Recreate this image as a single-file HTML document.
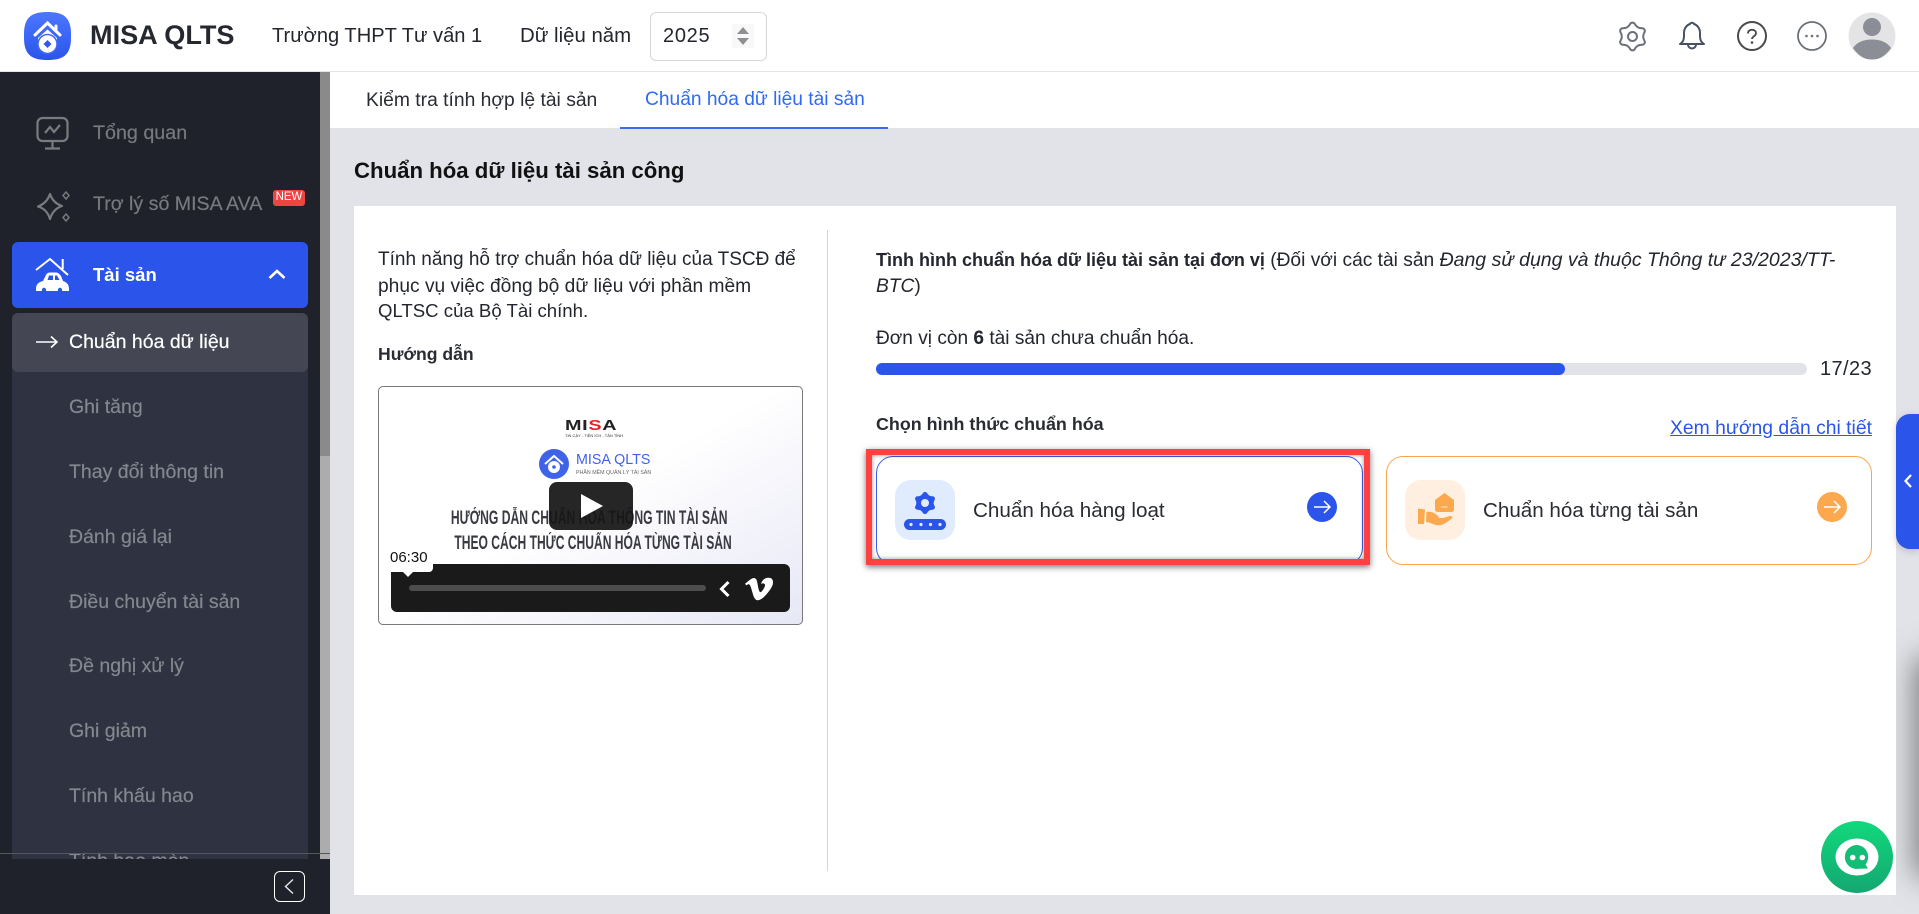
<!DOCTYPE html>
<html lang="vi"><head><meta charset="utf-8"><title>MISA QLTS</title>
<style>
html,body{margin:0;padding:0;width:1919px;height:914px;overflow:hidden;background:#fff}
body{font-family:"Liberation Sans","Noto Sans CJK SC",sans-serif;color:#23262e;position:relative}
.a{position:absolute}
.t{position:absolute;white-space:nowrap;line-height:24px;height:24px}
svg{display:block;overflow:visible}
b{font-weight:700}
.sub{font-size:19.500px;color:#85878f;left:69px;-webkit-text-stroke:.2px}
</style></head><body>

<!-- Header -->
<div class="a" style="left:0;top:0;width:1919px;height:71px;background:#fff"></div>
<div class="a" style="left:0;top:71px;width:1919px;height:1px;background:#e4e4e6"></div>
<svg class="a" style="left:24px;top:12px" width="47" height="48" viewBox="0 0 47 48">
<defs><linearGradient id="lg" x1="0" y1="0" x2="0" y2="1"><stop offset="0" stop-color="#4d77ff"/><stop offset="1" stop-color="#2b55ea"/></linearGradient></defs>
<path d="M23.5 0C38 0 47 4 47 22V26C47 44 38 48 23.5 48S0 44 0 26V22C0 4 9 0 23.5 0Z" fill="url(#lg)"/>
<path d="M11 23L23.500 11 36 23M32 18V14" fill="none" stroke="#fff" stroke-width="3" stroke-linecap="round"/>
<path d="M14 33V26L23.500 17.500 33 26V33Z" fill="#fff"/>
<circle cx="23.500" cy="32" r="9.500" fill="#fff" stroke="#3f69f6" stroke-width="1.500"/>
<path d="M23.500 28L27.500 32 23.500 36 19.500 32Z" fill="#3158ee"/>
</svg>
<div class="t" style="left:90px;top:23px;font-size:27.100px;font-weight:700;color:#26282f">MISA QLTS</div>
<div class="t" style="left:272px;top:24px;font-size:20.100px">Trường THPT Tư vấn 1</div>
<div class="t" style="left:520px;top:24px;font-size:20.400px">Dữ liệu năm</div>
<div class="a" style="left:650px;top:12px;width:115px;height:47px;border:1px solid #d5d6d9;border-radius:6px;background:#fff"></div>
<div class="t" style="left:663px;top:24px;font-size:20px;letter-spacing:.7px">2025</div>
<div class="a" style="left:732px;top:24px;width:22px;height:24px;background:#f8f8f8"></div>
<svg class="a" style="left:736px;top:26px" width="14" height="20" viewBox="0 0 14 20"><path d="M7 1L13 8H1Z M1 12H13L7 19Z" fill="#8f9094"/></svg>

<svg class="a" style="left:1618.500px;top:22.500px" width="27" height="27" viewBox="0 0 30 30"><path d="M12.330 1.260A3 3 0 0 1 17.670 1.260Q20.250 5.910 25.570 5.820A3 3 0 0 1 28.240 10.440Q25.500 15 28.240 19.560A3 3 0 0 1 25.570 24.180Q20.250 24.090 17.670 28.740A3 3 0 0 1 12.330 28.740Q9.750 24.090 4.430 24.180A3 3 0 0 1 1.760 19.560Q4.500 15 1.760 10.440A3 3 0 0 1 4.430 5.820Q9.750 5.910 12.330 1.260Z" fill="none" stroke="#6b7078" stroke-width="2.200"/><circle cx="15" cy="15" r="5" fill="none" stroke="#6b7078" stroke-width="2.200"/></svg>
<svg class="a" style="left:1677px;top:21px" width="30" height="30" viewBox="0 0 30 30"><path d="M3 23C5 22 7 20 7 15V12C7 7 10 4 13 3A2.200 2.200 0 0 1 17 3C20 4 23 7 23 12V15C23 20 25 22 27 23Z" fill="none" stroke="#475264" stroke-width="2" stroke-linejoin="round"/><path d="M11 23.500a4 4 0 0 0 8 0" fill="none" stroke="#475264" stroke-width="2"/></svg>
<svg class="a" style="left:1737px;top:21px" width="30" height="30" viewBox="0 0 30 30"><circle cx="15" cy="15" r="14" fill="none" stroke="#4a4a4d" stroke-width="2"/><path d="M11 12.500C11 10 12.700 8.800 15 8.800s4 1.400 4 3.400c0 3-4 3-4 5.800" fill="none" stroke="#4a4a4d" stroke-width="1.800"/><circle cx="15" cy="21.500" r="1.300" fill="#4a4a4d"/></svg>
<svg class="a" style="left:1797px;top:21px" width="30" height="30" viewBox="0 0 30 30"><circle cx="15" cy="15" r="14" fill="none" stroke="#6b7078" stroke-width="1.800"/><circle cx="9.500" cy="15" r="1.300" fill="#6b7078"/><circle cx="15" cy="15" r="1.300" fill="#6b7078"/><circle cx="20.500" cy="15" r="1.300" fill="#6b7078"/></svg>
<svg class="a" style="left:1848px;top:12px" width="48" height="48" viewBox="0 0 48 48"><defs><clipPath id="av"><circle cx="24" cy="24" r="23.500"/></clipPath></defs><circle cx="24" cy="24" r="23.500" fill="#e4e4e6"/><g clip-path="url(#av)"><circle cx="24" cy="15" r="9" fill="#8b8d97"/><path d="M5 36C9 30 16 27.500 24 27.500S39 30 43 36C39 42 32 48 24 48S9 42 5 36Z" fill="#8b8d97"/></g></svg>

<!-- Content -->
<div class="a" style="left:330px;top:72px;width:1589px;height:56px;background:#fff"></div>
<div class="a" style="left:330px;top:128px;width:1589px;height:786px;background:#e1e3e8;overflow:hidden">
  <div class="a" style="left:1591px;top:532px;width:20px;height:214px;border-radius:10px;box-shadow:0 0 30px 6px #777"></div>
</div>
<div class="t" style="left:366px;top:89px;font-size:19.300px;color:#2a2c33">Kiểm tra tính hợp lệ tài sản</div>
<div class="t" style="left:645px;top:88px;font-size:19.200px;color:#2c6bf6">Chuẩn hóa dữ liệu tài sản</div>
<div class="a" style="left:620px;top:127px;width:268px;height:1.500px;background:#3a6cf0"></div>
<div class="t" style="left:354px;top:159px;font-size:22.200px;font-weight:700;color:#111">Chuẩn hóa dữ liệu tài sản công</div>
<div class="a" style="left:354px;top:206px;width:1542px;height:689px;background:#fff"></div>
<div class="a" style="left:827px;top:230px;width:1px;height:641px;background:#d3d4d7"></div>

<!-- Left column -->
<div class="t" style="left:378px;top:248px;font-size:19px">Tính năng hỗ trợ chuẩn hóa dữ liệu của TSCĐ để</div>
<div class="t" style="left:378px;top:275px;font-size:19.200px">phục vụ việc đồng bộ dữ liệu với phần mềm</div>
<div class="t" style="left:378px;top:299px;font-size:18.600px">QLTSC của Bộ Tài chính.</div>
<div class="t" style="left:378px;top:342px;font-size:17.600px;font-weight:700;color:#2a2c33">Hướng dẫn</div>

<!-- Video -->
<div class="a" style="left:378px;top:386px;width:423px;height:237px;border:1px solid #77777c;border-radius:5px;overflow:hidden;background:linear-gradient(150deg,#fff 48%,#f5f5fb 70%,#e6e8f6 100%)">
  <div class="a" style="left:186px;top:31px;font-size:15px;line-height:16px;font-weight:900;color:#222;transform:scaleX(1.32);transform-origin:left;letter-spacing:.5px;white-space:nowrap">MI<span style="color:#e0252c">S</span>A</div>
  <div class="a" style="left:186px;top:46px;font-size:4px;line-height:5px;color:#333;white-space:nowrap">TIN CẬY - TIỆN ÍCH - TẬN TÌNH</div>
  <svg class="a" style="left:160px;top:62px" width="30" height="30" viewBox="0 0 30 30"><circle cx="15" cy="15" r="15" fill="#3f63e8"/><path d="M6 15L15 7l9 8" fill="none" stroke="#fff" stroke-width="2"/><circle cx="15" cy="18" r="6" fill="#fff"/><circle cx="15" cy="18" r="1.800" fill="#3f63e8"/></svg>
  <div class="a" style="left:197px;top:65px;font-size:14.300px;line-height:16px;color:#3f63e8;white-space:nowrap">MISA QLTS</div>
  <div class="a" style="left:197px;top:83px;font-size:5.300px;line-height:7px;color:#666;white-space:nowrap">PHẦN MỀM QUẢN LÝ TÀI SẢN</div>
  <div class="a" style="left:0;top:119px;width:423px;text-align:center;font-size:19px;line-height:25px;font-weight:700;color:#3a3b42;white-space:nowrap"><span style="display:inline-block;transform:scaleX(.64);margin-left:-6px">HƯỚNG DẪN CHUẨN HÓA THÔNG TIN TÀI SẢN</span><br><span style="display:inline-block;transform:scaleX(.636);margin-left:-4px">THEO CÁCH THỨC CHUẨN HÓA TỪNG TÀI SẢN</span></div>
  <div class="a" style="left:170px;top:95px;width:84px;height:48px;border-radius:8px;background:rgba(22,22,22,.93)"></div>
  <svg class="a" style="left:202px;top:107px" width="22" height="24" viewBox="0 0 22 24"><path d="M0 0L22 12 0 24Z" fill="#fff"/></svg>
  <div class="a" style="left:12px;top:177px;width:399px;height:48px;border-radius:6px;background:#1a1a1a"></div>
  <div class="a" style="left:30px;top:198px;width:297px;height:6px;border-radius:3px;background:#4d4d4d"></div>
  <svg class="a" style="left:340px;top:193px" width="12" height="18" viewBox="0 0 12 18"><path d="M9.500 2L2.500 9l7 7" fill="none" stroke="#fff" stroke-width="3"/></svg>
  <svg class="a" style="left:366px;top:189px" width="28" height="26" viewBox="0 0 24 24" preserveAspectRatio="none"><path d="M23.977 6.416c-.105 2.338-1.739 5.543-4.894 9.609-3.268 4.247-6.026 6.37-8.29 6.37-1.409 0-2.578-1.294-3.553-3.881L5.322 11.4C4.603 8.816 3.834 7.522 3.01 7.522c-.179 0-.806.378-1.881 1.132L0 7.197c1.185-1.044 2.351-2.084 3.501-3.128C5.08 2.701 6.266 1.984 7.055 1.91c1.867-.18 3.016 1.1 3.447 3.838.465 2.953.789 4.789.971 5.507.539 2.45 1.131 3.674 1.776 3.674.502 0 1.256-.796 2.265-2.385 1.004-1.589 1.54-2.797 1.612-3.628.144-1.371-.395-2.061-1.614-2.061-.574 0-1.167.121-1.777.391 1.186-3.868 3.434-5.757 6.762-5.637 2.473.06 3.628 1.664 3.493 4.797l-.013.01z" fill="#fff"/></svg>
  <div class="a" style="left:8px;top:162px;width:46px;height:23px;background:#fff;border-radius:0 0 4px 4px"></div>
  <svg class="a" style="left:23px;top:184px" width="12" height="7" viewBox="0 0 12 7"><path d="M0 0H12L6 6Z" fill="#fff"/></svg>
  <div class="a" style="left:11px;top:162px;font-size:15px;line-height:18px;color:#111;white-space:nowrap">06:30</div>
</div>

<!-- Right column -->
<div class="t" style="left:876px;top:248px;font-size:19.200px"><b style="font-size:18px">Tình hình chuẩn hóa dữ liệu tài sản tại đơn vị</b> (Đối với các tài sản <i style="font-size:19.500px">Đang sử dụng và thuộc Thông tư 23/2023/TT-</i></div>
<div class="t" style="left:876px;top:275px;font-size:19.200px"><i>BTC</i>)</div>
<div class="t" style="left:876px;top:327px;font-size:19.100px">Đơn vị còn <b>6</b> tài sản chưa chuẩn hóa.</div>
<div class="a" style="left:876px;top:363px;width:931px;height:12px;border-radius:6px;background:#e1e3e8"></div>
<div class="a" style="left:876px;top:363px;width:689px;height:12px;border-radius:6px;background:#2b55ea"></div>
<div class="t" style="left:1820px;top:357px;font-size:20px;letter-spacing:.4px">17/23</div>
<div class="t" style="left:876px;top:412px;font-size:17.900px;font-weight:700;color:#2a2c33">Chọn hình thức chuẩn hóa</div>
<div class="t" style="left:1572px;width:300px;text-align:right;top:416px;font-size:19.350px;color:#2b55ea;text-decoration:underline">Xem hướng dẫn chi tiết</div>

<!-- Card 1 -->
<div class="a" style="left:876px;top:456px;width:485px;height:107px;border:1px solid #3a5ee8;border-radius:17px;background:#fff"></div>
<div class="a" style="left:895px;top:480px;width:60px;height:60px;border-radius:16px;background:#e1ebfe"></div>
<svg class="a" style="left:905px;top:491px" width="40" height="40" viewBox="0 0 40 40"><path transform="translate(9.500 1.500) scale(.7)" d="M12.330 1.260A3 3 0 0 1 17.670 1.260Q20.250 5.910 25.570 5.820A3 3 0 0 1 28.240 10.440Q25.500 15 28.240 19.560A3 3 0 0 1 25.570 24.180Q20.250 24.090 17.670 28.740A3 3 0 0 1 12.330 28.740Q9.750 24.090 4.430 24.180A3 3 0 0 1 1.760 19.560Q4.500 15 1.760 10.440A3 3 0 0 1 4.430 5.820Q9.750 5.910 12.330 1.260Z" fill="#2b55ea" stroke="#2b55ea" stroke-width="1"/><circle cx="20" cy="12" r="4" fill="#e1ebfe"/><rect x="-1" y="28" width="42" height="11" rx="5.500" fill="#2b55ea"/><circle cx="6" cy="33.500" r="1.600" fill="#e1ebfe"/><circle cx="16" cy="33.500" r="1.600" fill="#e1ebfe"/><circle cx="25.500" cy="33.500" r="1.600" fill="#e1ebfe"/><circle cx="35" cy="33.500" r="1.600" fill="#e1ebfe"/></svg>
<div class="t" style="left:973px;top:499px;font-size:20.650px;color:#2a2c33">Chuẩn hóa hàng loạt</div>
<svg class="a" style="left:1307px;top:492px" width="30" height="30" viewBox="0 0 30 30"><circle cx="15" cy="15" r="15" fill="#2b55ea"/><path d="M7 15H23M17 9l6 6-6 6" fill="none" stroke="#fff" stroke-width="1.500"/></svg>

<!-- Highlight -->
<div class="a" style="left:866px;top:449px;width:492px;height:104px;border:6px solid #ff4040;box-shadow:0 2px 6px rgba(0,0,0,.55),inset 0 0 4px rgba(0,0,0,.45)"></div>

<!-- Card 2 -->
<div class="a" style="left:1386px;top:456px;width:484px;height:107px;border:1px solid #f9a54d;border-radius:17px;background:#fff"></div>
<div class="a" style="left:1405px;top:480px;width:60px;height:60px;border-radius:16px;background:#feefe0"></div>
<svg class="a" style="left:1417px;top:492px" width="36" height="36" viewBox="0 0 36 36"><path d="M18 8L27.500 1 37 8V17Q37 20 34 20H21Q18 20 18 17Z" fill="#fba84f"/><path d="M24.500 15H30.500" stroke="#feefe0" stroke-width="1"/><path d="M1 16.500L8 17.500 7 32 1 32Z" fill="#fba84f"/><path d="M9.500 20C14 19 18 21 21 24L22 26H26L33 24C36 24 36 26 34 27 28 32 24 34 19 33 15 32 12 30 9 30Z" fill="#fba84f"/></svg>
<div class="t" style="left:1483px;top:499px;font-size:20.600px;color:#2a2c33">Chuẩn hóa từng tài sản</div>
<svg class="a" style="left:1817px;top:492px" width="30" height="30" viewBox="0 0 30 30"><circle cx="15" cy="15" r="15" fill="#fba84f"/><path d="M7 15H23M17 9l6 6-6 6" fill="none" stroke="#fff" stroke-width="1.500"/></svg>

<!-- Side tab & chat -->
<div class="a" style="left:1896px;top:414px;width:23px;height:135px;background:#2b55ea;border-radius:14px 0 0 14px;box-shadow:0 2px 8px rgba(0,0,0,.18)"></div>
<svg class="a" style="left:1903px;top:472px" width="10" height="18" viewBox="0 0 10 18"><path d="M8 3L2.500 9 8 15" fill="none" stroke="#fff" stroke-width="2.200"/></svg>
<svg class="a" style="left:1821px;top:821px" width="72" height="72" viewBox="0 0 72 72"><defs><linearGradient id="cg" x1="0" y1="0" x2="0" y2="1"><stop offset="0" stop-color="#11d97c"/><stop offset="1" stop-color="#14a771"/></linearGradient></defs><circle cx="36" cy="36" r="36" fill="url(#cg)"/><ellipse cx="36" cy="36" rx="21.500" ry="18.500" fill="#fff"/><path d="M36 24A12 12 0 1 0 38 47.800L47 47.500 44.500 43.500A12 12 0 0 0 36 24Z" fill="#12bd76"/><circle cx="31.700" cy="36.500" r="2.800" fill="#fff"/><circle cx="41.300" cy="36.500" r="2.800" fill="#fff"/></svg>

<!-- Sidebar -->
<div class="a" style="left:0;top:72px;width:320px;height:842px;background:#1f222b"></div>
<div class="a" style="left:320px;top:72px;width:10px;height:384px;background:#8a8a8a"></div>
<div class="a" style="left:320px;top:456px;width:10px;height:403px;background:#acacac"></div>

<svg class="a" style="left:36px;top:117px" width="33" height="33" viewBox="0 0 33 33"><rect x="1.500" y="1" width="30" height="23" rx="5" fill="none" stroke="#7a7b7f" stroke-width="2.200"/><path d="M16.500 24V31M9 31.500H24" stroke="#7a7b7f" stroke-width="2.200"/><path d="M9 16L14 10 18 15 24 8" fill="none" stroke="#7a7b7f" stroke-width="2.200"/></svg>
<div class="t" style="left:93px;top:121px;font-size:19.700px;color:#78797e;-webkit-text-stroke:.2px">Tổng quan</div>
<svg class="a" style="left:37px;top:190px" width="34" height="32" viewBox="0 0 34 32"><path d="M13 4Q16 13 25 16Q16 19 13 29Q10 19 1 16.500Q10 13 13 4Z" fill="none" stroke="#7a7b7f" stroke-width="2.200" stroke-linejoin="round"/><path d="M29 2L32 5.500 29 9 26 5.500Z M29 24L32 27.500 29 31 26 27.500Z" fill="none" stroke="#7a7b7f" stroke-width="1.400"/></svg>
<div class="t" style="left:93px;top:192px;font-size:19.600px;color:#78797e;-webkit-text-stroke:.2px">Trợ lý số MISA AVA</div>
<div class="a" style="left:273px;top:190px;width:32px;height:16px;background:#ef4444;border-radius:3px;color:#fff;font-size:11.500px;line-height:15px;text-align:center">NEW</div>

<div class="a" style="left:12px;top:242px;width:296px;height:66px;background:#2b55ea;border-radius:6px"></div>
<svg class="a" style="left:36px;top:258px" width="33" height="34" viewBox="0 0 33 34"><path d="M0 12L14 1 32 17M26.700 1V11" fill="none" stroke="#fff" stroke-width="2"/><path d="M0 31C0 26 3 24 7 23L10 17C11 15 12 14.500 15 14.500H20C22 14.500 23 15.500 25 18L27 23C30 24 33 26 33 31V33H0Z" fill="#fff"/><path d="M11.500 22L13 17.500H17V22Z M19 17.500H21L23.500 22H19Z" fill="#2b55ea"/><circle cx="8" cy="32" r="2.200" fill="#2b55ea"/><circle cx="24" cy="32" r="2.200" fill="#2b55ea"/></svg>
<div class="t" style="left:93px;top:263px;font-size:18.500px;font-weight:700;color:#fff">Tài sản</div>
<svg class="a" style="left:268px;top:268px" width="18" height="12" viewBox="0 0 18 12"><path d="M1.500 10L9 3l7.500 7" fill="none" stroke="#fff" stroke-width="2.600"/></svg>

<div class="a" style="left:12px;top:313px;width:296px;height:546px;background:#2f3240;border-radius:6px 6px 0 0"></div>
<div class="a" style="left:12px;top:313px;width:296px;height:59px;background:#444753;border-radius:6px"></div>
<svg class="a" style="left:36px;top:334px" width="22" height="16" viewBox="0 0 22 16"><path d="M0 8H21M15 2.500L21 8 15 13.500" fill="none" stroke="#fff" stroke-width="1.600"/></svg>
<div class="t sub" style="top:330px;color:#fff">Chuẩn hóa dữ liệu</div>
<div class="t sub" style="top:395px">Ghi tăng</div>
<div class="t sub" style="top:460px">Thay đổi thông tin</div>
<div class="t sub" style="top:525px">Đánh giá lại</div>
<div class="t sub" style="top:590px">Điều chuyển tài sản</div>
<div class="t sub" style="top:654px">Đề nghị xử lý</div>
<div class="t sub" style="top:719px">Ghi giảm</div>
<div class="t sub" style="top:784px">Tính khấu hao</div>
<div class="t sub" style="top:849px">Tính hao mòn</div>

<div class="a" style="left:0;top:853px;width:330px;height:1px;background:#55575e"></div>
<div class="a" style="left:0;top:859px;width:330px;height:55px;background:#1f222b"></div>
<div class="a" style="left:274px;top:871px;width:29px;height:29px;border:1px solid #fff;border-radius:6px"></div>
<svg class="a" style="left:283px;top:878px" width="12" height="17" viewBox="0 0 12 17"><path d="M10 1.500L2.500 8.500 10 15.500" fill="none" stroke="#e8e8e8" stroke-width="1.400"/></svg>
</body></html>
